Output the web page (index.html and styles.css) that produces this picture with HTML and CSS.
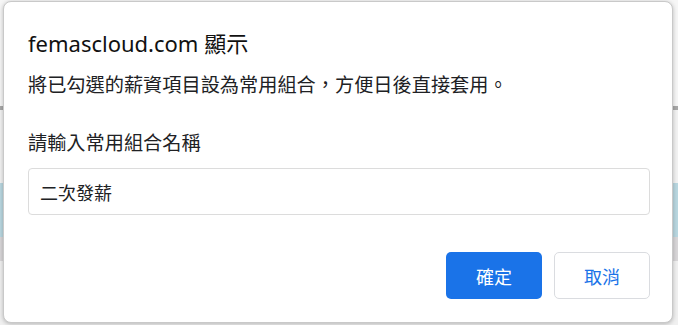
FILE: index.html
```html
<!DOCTYPE html>
<html lang="zh-Hant">
<head>
    <meta charset="UTF-8">
    <meta name="viewport" content="width=device-width, initial-scale=1.0">
    <title>femascloud.com 顯示</title>
    <link rel="stylesheet" href="styles.css">
</head>
<body>
    <!-- Página detrás del diálogo -->
    <div class="page">
        <div class="page-top"></div>
        <div class="page-mark"></div>
        <div class="page-gap"></div>
        <div class="page-band"></div>
        <div class="page-row"></div>
        <div class="page-rest"></div>
    </div>

    <!-- Diálogo -->
    <div class="dialog">
        <div class="dialog-title">femascloud.com 顯示</div>
        <div class="dialog-message">將已勾選的薪資項目設為常用組合，方便日後直接套用。</div>
        <div class="dialog-label">請輸入常用組合名稱</div>
        <input class="dialog-input" type="text" value="二次發薪">
        <div class="dialog-buttons">
            <button class="button button-ok">確定</button>
            <button class="button button-cancel">取消</button>
        </div>
    </div>
</body>
</html>
```

FILE: styles.css
```css
html, body {
    margin: 0;
    padding: 0;
    width: 678px;
    height: 325px;
    overflow: hidden;
}
body {
    font-family: "Noto Sans", "Noto Sans CJK TC", sans-serif;
    background: #f4f4f4;
    position: relative;
}
.page {
    display: flex;
    flex-direction: column;
    height: 325px;
}
.page-top {
    height: 106px;
    background: #f6f6f6;
}
.page-mark {
    height: 4px;
    background: #a8a8a8;
}
.page-gap {
    height: 73px;
    background: #f2f2f2;
}
.page-band {
    height: 54px;
    background: #b9d7e0;
}
.page-row {
    height: 24px;
    background: #d8d6d8;
}
.page-rest {
    flex: 1;
    background: #f0f0f0;
}

/* Diálogo encima de la página */
.dialog {
    position: absolute;
    left: 3px;
    top: 1px;
    width: 670px;
    height: 322px;
    box-sizing: border-box;
    background: #fff;
    border: 1px solid #c9c9c9;
    border-radius: 8px;
    box-shadow: 0 1px 4px rgba(0, 0, 0, 0.25);
    padding: 0 22px 0 24px;
    color: #202124;
    display: flex;
    flex-direction: column;
}
.dialog-title {
    font-size: 22px;
    line-height: 28px;
    margin-top: 27px;
    color: #111;
}
.dialog-message {
    font-size: 19.2px;
    line-height: 26px;
    margin-top: 14px;
    font-family: "Noto Sans CJK TC", sans-serif;
}
.dialog-label {
    font-size: 19.2px;
    line-height: 26px;
    margin-top: 32px;
    font-family: "Noto Sans CJK TC", sans-serif;
}
.dialog-input {
    margin-top: 13px;
    height: 47px;
    box-sizing: border-box;
    border: 1px solid #dcdcdc;
    border-radius: 4px;
    padding: 0 11px;
    font-size: 18px;
    font-family: "Noto Sans CJK TC", sans-serif;
    color: #202124;
    outline: none;
}
.dialog-buttons {
    display: flex;
    justify-content: flex-end;
    gap: 12px;
    margin-top: 37px;
}
.button {
    width: 96px;
    height: 47px;
    box-sizing: border-box;
    border-radius: 5px;
    font-size: 18px;
    font-family: "Noto Sans CJK TC", sans-serif;
    cursor: pointer;
}
.button-ok {
    background: #1a73e8;
    color: #fff;
    border: none;
}
.button-cancel {
    background: #fff;
    color: #1a73e8;
    border: 1px solid #dadce0;
}
```
